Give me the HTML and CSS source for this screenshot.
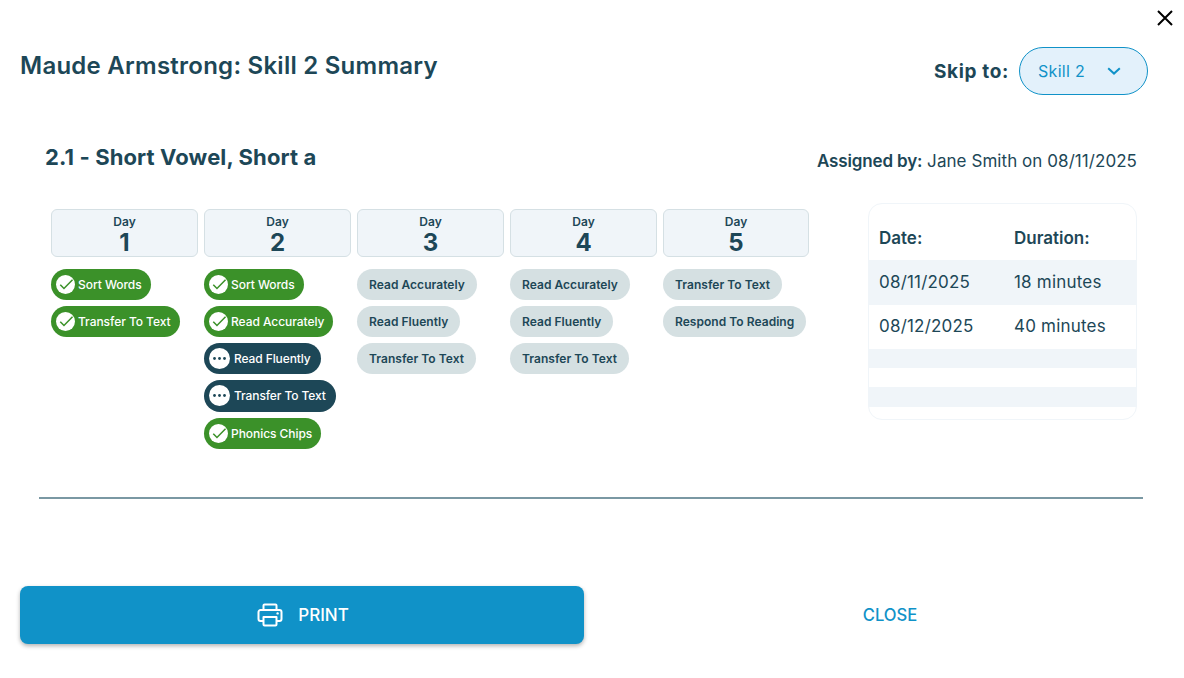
FILE: index.html
```html
<!DOCTYPE html>
<html lang="en">
<head>
<meta charset="utf-8">
<title>Skill 2 Summary</title>
<link rel="stylesheet" href="styles.css">
</head>
<body>
<div class="dialog">
  <button class="close-x" aria-label="Close">
    <svg viewBox="0 0 18 18" width="18" height="18"><path d="M2 2L16 16M16 2L2 16" stroke="#000" stroke-width="2" fill="none"/></svg>
  </button>
  <header class="head">
    <h1 class="title">Maude Armstrong: Skill 2 Summary</h1>
    <div class="skip">
      <span class="skip-label">Skip to:</span>
      <div class="select"><span>Skill 2</span>
        <svg viewBox="0 0 14 8" width="14" height="8"><path d="M1.2 1.2L7 6.6L12.8 1.2" stroke="#1092c8" stroke-width="2" fill="none"/></svg>
      </div>
    </div>
  </header>
  <section class="sub">
    <h2 class="lesson">2.1 - Short Vowel, Short a</h2>
    <p class="assigned"><b>Assigned by:</b> Jane Smith on 08/11/2025</p>
  </section>
  <section class="main">
    <div class="days">
      <div class="day">
        <div class="day-head"><span class="dl">Day</span><span class="dn">1</span></div>
        <div class="pill done"><svg class="ic" viewBox="0 0 20 20"><circle cx="10" cy="10" r="10" fill="#fff"/><path d="M4.5 10.2L8.4 14.2L17.4 5" stroke="#3b9129" stroke-width="1.6" fill="none"/></svg>Sort Words</div>
        <div class="pill done"><svg class="ic" viewBox="0 0 20 20"><circle cx="10" cy="10" r="10" fill="#fff"/><path d="M4.5 10.2L8.4 14.2L17.4 5" stroke="#3b9129" stroke-width="1.6" fill="none"/></svg>Transfer To Text</div>
      </div>
      <div class="day">
        <div class="day-head"><span class="dl">Day</span><span class="dn">2</span></div>
        <div class="pill done"><svg class="ic" viewBox="0 0 20 20"><circle cx="10" cy="10" r="10" fill="#fff"/><path d="M4.5 10.2L8.4 14.2L17.4 5" stroke="#3b9129" stroke-width="1.6" fill="none"/></svg>Sort Words</div>
        <div class="pill done"><svg class="ic" viewBox="0 0 20 20"><circle cx="10" cy="10" r="10" fill="#fff"/><path d="M4.5 10.2L8.4 14.2L17.4 5" stroke="#3b9129" stroke-width="1.6" fill="none"/></svg>Read Accurately</div>
        <div class="pill prog"><svg class="ic wide" viewBox="0 0 21 21"><circle cx="10.5" cy="10.5" r="10.5" fill="#fff"/><circle cx="5.5" cy="10.5" r="1.4" fill="#1d4757"/><circle cx="10.5" cy="10.5" r="1.4" fill="#1d4757"/><circle cx="15.5" cy="10.5" r="1.4" fill="#1d4757"/></svg>Read Fluently</div>
        <div class="pill prog tall"><svg class="ic wide" viewBox="0 0 21 21"><circle cx="10.5" cy="10.5" r="10.5" fill="#fff"/><circle cx="5.5" cy="10.5" r="1.4" fill="#1d4757"/><circle cx="10.5" cy="10.5" r="1.4" fill="#1d4757"/><circle cx="15.5" cy="10.5" r="1.4" fill="#1d4757"/></svg>Transfer To Text</div>
        <div class="pill done raised"><svg class="ic" viewBox="0 0 20 20"><circle cx="10" cy="10" r="10" fill="#fff"/><path d="M4.5 10.2L8.4 14.2L17.4 5" stroke="#3b9129" stroke-width="1.6" fill="none"/></svg>Phonics Chips</div>
      </div>
      <div class="day">
        <div class="day-head"><span class="dl">Day</span><span class="dn">3</span></div>
        <div class="pill todo">Read Accurately</div>
        <div class="pill todo">Read Fluently</div>
        <div class="pill todo">Transfer To Text</div>
      </div>
      <div class="day">
        <div class="day-head"><span class="dl">Day</span><span class="dn">4</span></div>
        <div class="pill todo">Read Accurately</div>
        <div class="pill todo">Read Fluently</div>
        <div class="pill todo">Transfer To Text</div>
      </div>
      <div class="day last">
        <div class="day-head"><span class="dl">Day</span><span class="dn">5</span></div>
        <div class="pill todo">Transfer To Text</div>
        <div class="pill todo">Respond To Reading</div>
      </div>
    </div>
    <div class="log">
      <div class="row r-head"><b>Date:</b><b>Duration:</b></div>
      <div class="row r-a alt"><span>08/11/2025</span><span>18 minutes</span></div>
      <div class="row r-b"><span>08/12/2025</span><span>40 minutes</span></div>
      <div class="row r-e alt"></div>
      <div class="row r-e"></div>
      <div class="row r-e2 alt"></div>
    </div>
  </section>
  <hr class="rule">
  <footer class="foot">
    <button class="print">
      <svg viewBox="0 0 26 24" width="26" height="24"><g stroke="#fff" stroke-width="2" fill="none" stroke-linejoin="round"><path d="M6.5 7V2.6a1 1 0 0 1 1-1h11a1 1 0 0 1 1 1V7"/><path d="M6.5 18H3.5a2 2 0 0 1-2-2v-7a2 2 0 0 1 2-2h19a2 2 0 0 1 2 2v7a2 2 0 0 1-2 2h-3"/><path d="M6.5 14h13v7.4a1 1 0 0 1-1 1h-11a1 1 0 0 1-1-1z"/></g><circle cx="20.6" cy="10.4" r="1.2" fill="#fff"/></svg>
      PRINT
    </button>
    <button class="close">CLOSE</button>
  </footer>
</div>
</body>
</html>
```
FILE: styles.css
```css
* { box-sizing: border-box; }
html, body { margin: 0; padding: 0; background: #fff; }
body { width: 1184px; height: 678px; overflow: hidden; font-family: Inter, "Liberation Sans", sans-serif; color: #1d4757; }
.dialog { position: relative; width: 1184px; height: 678px; padding: 47px 36px 0 20px; }
button { font-family: inherit; border: 0; background: none; cursor: pointer; padding: 0; }
.close-x { position: absolute; left: 1156px; top: 9px; width: 18px; height: 18px; line-height: 0; }
.head { display: flex; justify-content: space-between; align-items: flex-start; height: 48px; }
.title { margin: 4px 0 0; font-size: 24px; line-height: 30px; font-weight: 600; letter-spacing: 0.25px; }
.skip { display: flex; align-items: center; gap: 10px; }
.skip-label { font-size: 19px; font-weight: 700; letter-spacing: 0.65px; }
.select { width: 129px; height: 48px; border: 1px solid #1092c8; border-radius: 24px; background: #e3f1fb; color: #1092c8; display: flex; align-items: center; gap: 22px; padding-left: 18px; font-size: 16px; letter-spacing: 0.3px; }
.sub { display: flex; justify-content: space-between; align-items: flex-start; padding: 47px 11px 0 25px; height: 114px; }
.lesson { margin: 0; font-size: 22px; line-height: 30px; font-weight: 700; letter-spacing: 0.12px; }
.assigned { margin: 7px 0 0; font-size: 17px; line-height: 24px; letter-spacing: 0.06px; }
.assigned b { font-weight: 600; letter-spacing: -0.15px; }
.main { display: flex; justify-content: space-between; padding: 0 11px 0 31px; height: 288px; margin-top: -6px; margin-bottom: 6px; }
.days { display: flex; gap: 6px; padding-top: 6px; }
.day { width: 147px; display: flex; flex-direction: column; align-items: flex-start; gap: 6px; }
.day.last { width: 146px; }
.day-head { width: 100%; height: 48px; margin-bottom: 6px; background: #f0f5f9; border: 1px solid #d5e0e4; border-radius: 6px; display: flex; flex-direction: column; align-items: center; padding-top: 5px; }
.dl { font-size: 12px; line-height: 14px; font-weight: 600; }
.dn { font-size: 24px; line-height: 28px; font-weight: 700; }
.pill { height: 31px; border-radius: 16px; display: flex; align-items: center; font-size: 12px; font-weight: 500; white-space: nowrap; }
.pill.tall { height: 32px; padding-bottom: 1px; }
.pill.raised { padding-bottom: 1px; }
.ic { width: 19px; height: 19px; margin-right: 3px; flex: none; }
.ic.wide { width: 21px; height: 21px; margin-right: 4px; }
.done { background: #3b9129; color: #fff; padding: 0 9px 0 5px; letter-spacing: -0.05px; }
.prog { background: #1d4757; color: #fff; padding: 0 10px 0 5px; letter-spacing: -0.1px; }
.todo { background: #d5e0e2; color: #1d4757; font-weight: 600; padding: 0 12px; letter-spacing: 0.04px; }
.log { width: 269px; height: 217px; border: 1px solid #f0f5f9; border-radius: 14px; overflow: hidden; }
.row { display: grid; grid-template-columns: 135px 1fr; padding-left: 10px; align-items: center; font-size: 17px; letter-spacing: 0.2px; }
.row b { font-weight: 600; letter-spacing: 0; }
.r-head { height: 56px; padding-top: 12px; }
.r-a { height: 45px; padding-bottom: 2px; }
.r-b { height: 44px; padding-bottom: 3px; }
.r-e { height: 19px; }
.r-e2 { height: 20px; }
.alt { background: #f0f5f9; }
.rule { margin: 0 5px 0 19px; border: 0; height: 2px; background: #7a98a3; }
.foot { display: flex; margin-top: 87px; margin-right: -48px; }
.print { flex: none; width: 564px; height: 58px; padding-left: 2px; background: #1092c8; color: #fff; border-radius: 8px; box-shadow: 0 2px 4px rgba(0,0,0,.3); display: flex; align-items: center; justify-content: center; gap: 15px; font-size: 17px; font-weight: 500; }
.close { flex: none; width: 612px; height: 58px; color: #1092c8; font-size: 16.6px; font-weight: 500; }
```
